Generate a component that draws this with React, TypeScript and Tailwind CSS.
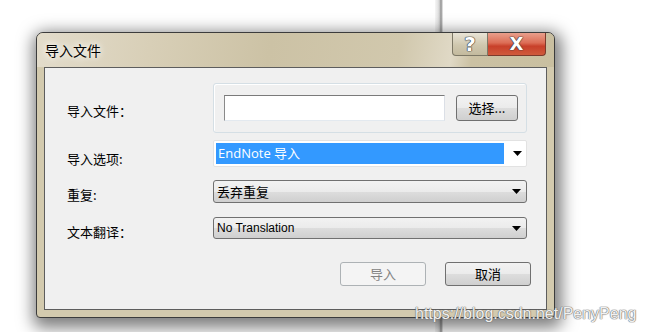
import React from 'react';

const cjk = "font-['Noto_Sans_CJK_SC','Noto_Sans',sans-serif]";

const Arrow = () => (
  <svg width="9" height="5" viewBox="0 0 9 5" className="shrink-0">
    <path d="M0 0h9L4.5 5z" fill="#000" />
  </svg>
);

const Dropdown: React.FC<{ label: string; h: string; latin?: boolean }> = ({ label, h, latin }) => (
  <div
    className={`${h} w-[314px] flex items-center justify-between pl-[3px] pr-[5px] rounded-[3px] border border-[#707070] bg-[linear-gradient(#f2f2f2_0%,#ebebeb_50%,#dddddd_51%,#cfcfcf_100%)]`}
  >
    <span
      className={
        latin
          ? "font-['Liberation_Sans',sans-serif] text-[12px] text-black"
          : `${cjk} text-[13px] text-black`
      }
    >
      {label}
    </span>
    <Arrow />
  </div>
);

const Label: React.FC<{ text: string }> = ({ text }) => (
  <div className={`w-[146px] ${cjk} text-[13px] text-black leading-none`}>{text}</div>
);

export default function App() {
  return (
    <div className="relative w-[645px] h-[332px] overflow-hidden bg-white">
      {/* background window edge */}
      <div className="absolute left-[435px] top-0 w-[8px] h-[332px] bg-[linear-gradient(to_right,#f6f6f6,#e2e2e2_40%,#c4c4c4_60%,#8e8e8e_75%,#cccccc_90%,#f2f2f2)]" />

      <div className="pt-[32px] pl-[36px]">
        <div className="relative w-[519px] h-[286px] rounded-t-[7px] rounded-b-[4px] border border-[#3c3c3c] bg-[#d3caae] shadow-[2px_5px_16px_5px_rgba(0,0,0,0.5)] flex flex-col">
          {/* title bar */}
          <div className="h-[34px] flex items-start justify-between rounded-t-[6px] bg-[linear-gradient(100deg,#e3dccb_0%,#d8cfb7_22%,#ccc2a5_45%,#d1c8ad_70%,#e0d9c6_80%,#cbc1a3_84%,#c9bfa0_100%)]">
            <div className={`pl-[8px] pt-[10px] ${cjk} text-[14px] leading-none text-black [text-shadow:0_0_6px_#fff,0_0_10px_#fff]`}>
              导入文件
            </div>
            <div className="flex mr-[8px]">
              <div className="w-[36px] h-[23px] flex items-center justify-center rounded-bl-[4px] border border-t-0 border-[#7d7866] bg-[linear-gradient(#e9e4d6,#cfc7ae_55%,#c3ba9e)]">
                <span className="font-['DejaVu_Sans',sans-serif] text-[20px] font-bold leading-none text-white [text-shadow:0_0_1px_#444,0_0_1px_#444,0_0_1px_#444,0_0_1px_#444]">
                  ?
                </span>
              </div>
              <div className="w-[58px] h-[23px] flex items-center justify-center rounded-br-[4px] border border-t-0 border-l-0 border-[#7c3a2c] bg-[linear-gradient(#e99f8c,#dc6d55_45%,#c8402a_60%,#cf5a3c)]">
                <span className="font-['DejaVu_Sans',sans-serif] text-[18px] font-bold leading-none text-white [text-shadow:0_0_1px_#444,0_0_1px_#444,0_0_1px_#444,0_0_1px_#444]">
                  X
                </span>
              </div>
            </div>
          </div>

          {/* client area */}
          <div className="mx-[7px] w-[503px] h-[243px] border border-[#5d5d5d] bg-[#f0f0f0] pt-[15px] pl-[22px] flex flex-col">
            <div className="flex items-center">
              <div className="pt-[5px]">
                <Label text="导入文件：" />
              </div>
              <div className="w-[314px] h-[50px] rounded-[3px] border border-[#d5dfe5] shadow-[inset_1px_1px_0_#fff] flex items-center pl-[10px]">
                <div className="w-[221px] h-[26px] bg-white border border-[#abadb3] border-t-[#7a7a7a] border-l-[#8a8a8a] border-b-[#e3e9ef] border-r-[#dbdfe6]" />
                <div
                  className={`ml-[11px] w-[62px] h-[26px] flex items-center justify-center rounded-[3px] border border-[#707070] bg-[linear-gradient(#f2f2f2_0%,#ebebeb_50%,#dddddd_51%,#cfcfcf_100%)] ${cjk} text-[13px] text-black`}
                >
                  选择...
                </div>
              </div>
            </div>

            <div className="mt-[7px] flex items-center">
              <div className="pt-[10px]">
                <Label text="导入选项:" />
              </div>
              <div className="w-[314px] h-[27px] rounded-[2px] border border-[#e2e2e2] bg-white flex items-center pl-[2px] pr-[4px]">
                <div className="flex-1 h-[21px] bg-[#3399ff] flex items-center pl-[2px] font-['Open_Sans','Noto_Sans_CJK_SC',sans-serif] text-[13px] text-white">
                  EndNote 导入
                </div>
                <div className="w-[18px] flex justify-end">
                  <Arrow />
                </div>
              </div>
            </div>

            <div className="mt-[13px] flex items-center">
              <div className="pt-[6px]">
                <Label text="重复:" />
              </div>
              <Dropdown label="丢弃重复" h="h-[23px]" />
            </div>

            <div className="mt-[14px] flex items-center">
              <div className="pt-[6px]">
                <Label text="文本翻译：" />
              </div>
              <Dropdown label="No Translation" h="h-[22px]" latin />
            </div>

            <div className="mt-[23px] flex pl-[273px] gap-[19px]">
              <div className={`w-[86px] h-[24px] flex items-center justify-center rounded-[3px] border border-[#adb2b5] bg-[#f4f4f4] ${cjk} text-[13px] text-[#838383]`}>
                导入
              </div>
              <div className={`w-[86px] h-[24px] flex items-center justify-center rounded-[3px] border border-[#707070] bg-[linear-gradient(#f2f2f2_0%,#ebebeb_50%,#dddddd_51%,#cfcfcf_100%)] ${cjk} text-[13px] text-black`}>
                取消
              </div>
            </div>
          </div>
        </div>
      </div>

      <div className="absolute left-[415px] top-[302px] font-['Liberation_Sans',sans-serif] text-[16px] text-white/90 [text-shadow:0_0_1px_#6e6e6e,0_0_1px_#6e6e6e,0_0_1px_#6e6e6e]">
        https://blog.csdn.net/PenyPeng
      </div>
    </div>
  );
}
